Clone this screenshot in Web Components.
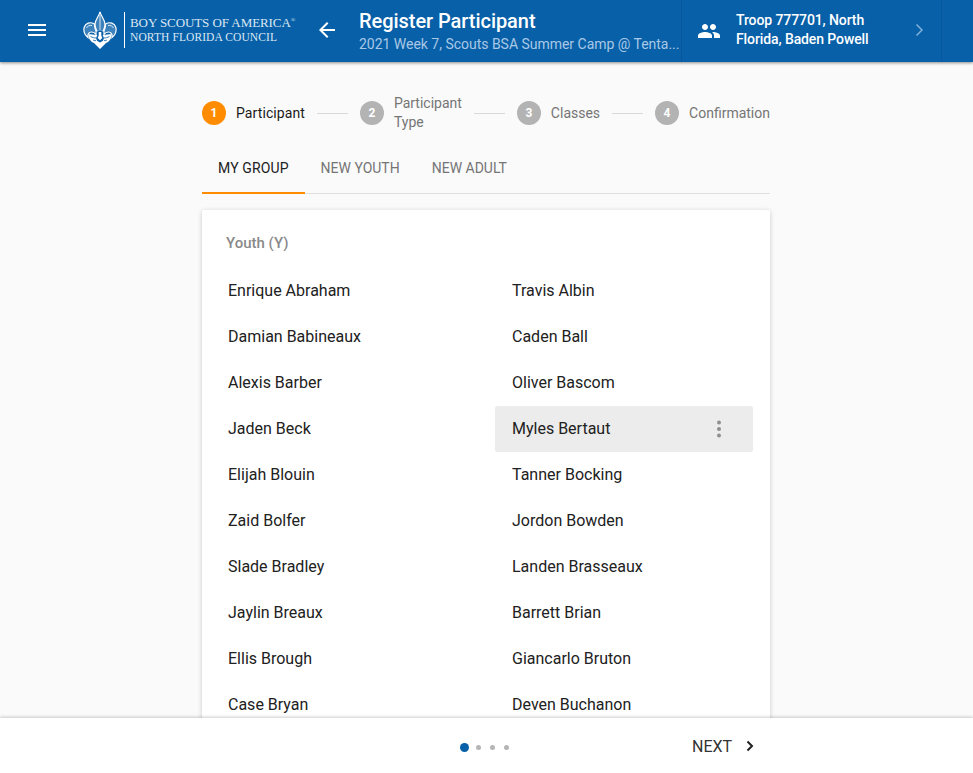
<!DOCTYPE html>
<html lang="en">
<head>
<meta charset="utf-8">
<title>Register Participant</title>
<style>
  html, body { margin: 0; height: 100%; overflow: hidden; }
  body {
    display: flex;
    flex-direction: column;
    background: #fafafa;
    font-family: Roboto, "Liberation Sans", sans-serif;
    color: #212121;
  }
</style>
</head>
<body>
<app-header></app-header>
<wizard-page>
  <step-bar></step-bar>
  <tab-bar></tab-bar>
  <name-card titulo="Youth (Y)">
    <name-item>Enrique Abraham</name-item>
    <name-item>Travis Albin</name-item>
    <name-item>Damian Babineaux</name-item>
    <name-item>Caden Ball</name-item>
    <name-item>Alexis Barber</name-item>
    <name-item>Oliver Bascom</name-item>
    <name-item>Jaden Beck</name-item>
    <name-item activo>Myles Bertaut</name-item>
    <name-item>Elijah Blouin</name-item>
    <name-item>Tanner Bocking</name-item>
    <name-item>Zaid Bolfer</name-item>
    <name-item>Jordon Bowden</name-item>
    <name-item>Slade Bradley</name-item>
    <name-item>Landen Brasseaux</name-item>
    <name-item>Jaylin Breaux</name-item>
    <name-item>Barrett Brian</name-item>
    <name-item>Ellis Brough</name-item>
    <name-item>Giancarlo Bruton</name-item>
    <name-item>Case Bryan</name-item>
    <name-item>Deven Buchanon</name-item>
  </name-card>
</wizard-page>
<wizard-footer></wizard-footer>

<script>
class bsaLogo extends HTMLElement {
  constructor() {
    super();
    this.attachShadow({mode: "open"});
  }
  connectedCallback() {
    this.shadowRoot.innerHTML = /*html*/ `
    <style>
      :host { display: flex; align-items: center; height: 38px; }
      svg { width: 34px; height: 38px; display: block; flex: none; }
      .sep { width: 1px; height: 36px; background: #fff; margin: 0 5px 0 7px; }
      .txt {
        font-family: "Liberation Serif", serif;
        color: #dbe7f3;
        white-space: nowrap;
        padding-bottom: 1px;
      }
      .a { font-size: 13px; line-height: 15px; letter-spacing: -.08px; }
      .b { font-size: 11.5px; line-height: 14px; letter-spacing: .1px; }
      sup { font-size: 6px; line-height: 0; vertical-align: 5px; }
    </style>
    <svg viewBox="0 0 34 38">
      <!-- petalos y punta: contorno blanco, interior azul -->
      <g fill="#3d82bb" stroke="#fff" stroke-width="1.200">
        <path d="M17 .8c.8 4 4.500 7.500 5 12.200.3 3-1.200 5-1.700 7h-6.600c-.5-2-2-4-1.700-7C12.500 8.300 16.200 4.800 17 .8z"/>
        <path d="M11.500 13C7 10.500 2.500 12 1.200 16.200.3 20 2 24 5 26.500c-.5-3 .8-5.500 3.500-5.500 2 0 3.500 1 4.500 2.500V20c-1-2-1.700-4-1.500-7z"/>
        <path d="M22.500 13c4.500-2.500 9-1 10.300 3.200.9 3.800-.8 7.800-3.800 10.300.5-3-.8-5.500-3.500-5.500-2 0-3.500 1-4.500 2.500V20c1-2 1.700-4 1.500-7z"/>
      </g>
      <!-- aguila -->
      <path fill="#fff" d="M5.500 23.500c3-1 6.500.8 11.500.8s8.500-1.800 11.500-.8c0 4.500-2.500 7.500-5.500 8.500l-6 6-6-6c-3-1-5.500-4-5.500-8.500z"/>
      <path fill="none" stroke="#fff" stroke-width=".8" d="M17 4v15M3.500 17c1-2 3-3 5.500-2.500M30.500 17c-1-2-3-3-5.500-2.500"/>
      <path fill="#0860a8" d="M14.500 19.500h5l-.2 4 1.700 3.500-1 2.700-3 1.800-3-1.800-1-2.700 1.700-3.500z"/>
      <path fill="#fff" d="M15.700 21h2.600v3.500l1 2.500-2.300 2.300-2.300-2.300 1-2.500z"/>
      <path fill="none" stroke="#0860a8" stroke-width=".8" d="M7.500 25.500c2 1 4 1.500 5.500 1.500M26.500 25.500c-2 1-4 1.500-5.500 1.500M10 29c1 .6 2 .8 3 .5M24 29c-1 .6-2 .8-3 .5"/>
    </svg>
    <div class="sep"></div>
    <div class="txt">
      <div class="a">BOY SCOUTS OF AMERICA<sup>®</sup></div>
      <div class="b">NORTH FLORIDA COUNCIL</div>
    </div>
    `;
  }
}
customElements.define("bsa-logo", bsaLogo);

class appHeader extends HTMLElement {
  constructor() {
    super();
    this.attachShadow({mode: "open"});
  }
  connectedCallback() {
    this.shadowRoot.innerHTML = /*html*/ `
    <style>
      :host {
        display: flex;
        flex: none;
        height: 62px;
        align-items: stretch;
        background: #0860a8;
        color: #fff;
        box-shadow: 0 1px 3px rgba(0,0,0,.45);
        position: relative;
        z-index: 2;
      }
      svg { display: block; fill: currentColor; }
      .menu { width: 24px; height: 24px; margin: 18px 0 0 25px; flex: none; }
      bsa-logo { margin: 11px 0 0 34px; height: 38px; width: 218px; flex: none; }
      .back { width: 24px; height: 24px; margin: 18px 0 0 14px; flex: none; }
      .titles { width: 322px; margin-left: 20px; min-width: 0; flex: none; }
      .title { font-size: 20px; font-weight: 500; line-height: 24px; margin-top: 9px; letter-spacing: -.05px; white-space: nowrap; }
      .sub {
        font-size: 14px;
        line-height: 20px;
        margin-top: 1px;
        color: #a8c8e6;
        white-space: nowrap;
        letter-spacing: -.02px;
      }
      .troop {
        display: flex;
        align-items: center;
        width: 259px;
        flex: none;
        border-left: 1px solid #07579a;
        border-right: 1px solid #07579a;
      }
      .people { width: 24px; height: 24px; margin-left: 15px; flex: none; }
      .name { font-size: 14px; font-weight: 500; line-height: 19px; margin: 0 0 2px 15px; width: 150px; letter-spacing: -.1px; }
      .chev { width: 20px; height: 20px; margin: 0 0 2px 23px; color: #7fb0dc; }
    </style>
    <svg class="menu" viewBox="0 0 24 24"><path d="M3 18h18v-2H3v2zm0-5h18v-2H3v2zm0-7v2h18V6H3z"/></svg>
    <bsa-logo></bsa-logo>
    <svg class="back" viewBox="0 0 24 24"><path d="M20 11H7.830l5.590-5.590L12 4l-8 8 8 8 1.410-1.410L7.830 13H20v-2z"/></svg>
    <div class="titles">
      <div class="title">Register Participant</div>
      <div class="sub">2021 Week 7, Scouts BSA Summer Camp @ Tenta...</div>
    </div>
    <div class="troop">
      <svg class="people" viewBox="0 0 24 24"><path d="M16 11c1.660 0 2.990-1.340 2.990-3S17.660 5 16 5s-3 1.340-3 3 1.340 3 3 3zm-8 0c1.660 0 2.990-1.340 2.990-3S9.660 5 8 5 5 6.340 5 8s1.340 3 3 3zm0 2c-2.330 0-7 1.170-7 3.500V19h14v-2.500c0-2.330-4.670-3.500-7-3.500zm8 0c-.29 0-.62.020-.97.050 1.160.84 1.970 1.970 1.970 3.450V19h6v-2.500c0-2.330-4.670-3.500-7-3.500z"/></svg>
      <div class="name">Troop 777701, North Florida, Baden Powell</div>
      <svg class="chev" viewBox="0 0 20 20"><path fill="none" stroke="currentColor" stroke-width="1.500" d="M7.500 4.500 13 10l-5.500 5.500"/></svg>
    </div>
    `;
  }
}
customElements.define("app-header", appHeader);

class wizardPage extends HTMLElement {
  constructor() {
    super();
    this.attachShadow({mode: "open"});
    this.shadowRoot.innerHTML = /*html*/ `
    <style>
      :host {
        display: block;
        flex: 1;
        min-height: 0;
        overflow: hidden;
      }
      .col { width: 568px; margin: 0 0 0 202px; padding-top: 31px; }
    </style>
    <div class="col"><slot></slot></div>
    `;
  }
}
customElements.define("wizard-page", wizardPage);

class stepBar extends HTMLElement {
  constructor() {
    super();
    this.attachShadow({mode: "open"});
  }
  connectedCallback() {
    const pasos = [["1", "Participant"], ["2", "Participant Type"], ["3", "Classes"], ["4", "Confirmation"]];
    const html = pasos.map((p, i) => `
      <div class="step ${i === 0 ? "on" : ""}">
        <span class="dot">${p[0]}</span>
        <span class="label ${i === 1 ? "wrap" : ""}">${p[1]}</span>
      </div>`).join(`<div class="line"></div>`);
    this.shadowRoot.innerHTML = /*html*/ `
    <style>
      :host { display: flex; align-items: center; height: 40px; font-size: 14px; color: #757575; }
      .step { display: flex; align-items: center; flex: none; }
      .dot {
        width: 24px;
        height: 24px;
        border-radius: 50%;
        background: #b3b3b3;
        color: #fff;
        font-size: 12px;
        font-weight: 700;
        line-height: 24px;
        text-align: center;
        margin-right: 10px;
      }
      .on .dot { background: #ff8c00; }
      .on .label { color: #1a1a1a; letter-spacing: .09px; }
      .label { line-height: 19px; }
      .wrap { width: 68px; }
      .line { flex: 1; height: 1px; background: #d9d9d9; margin: 0 12px; }
    </style>
    ${html}
    `;
  }
}
customElements.define("step-bar", stepBar);

class tabBar extends HTMLElement {
  constructor() {
    super();
    this.attachShadow({mode: "open"});
    this.shadowRoot.innerHTML = /*html*/ `
    <style>
      :host {
        display: flex;
        height: 51px;
        margin-top: 10px;
        border-bottom: 1px solid #e0e0e0;
        box-sizing: border-box;
        font-size: 14px;
        color: #757575;
      }
      .tab { padding: 0 16px; line-height: 50px; height: 51px; box-sizing: border-box; white-space: nowrap; }
      .on { color: #212121; border-bottom: 2px solid #ff8c00; letter-spacing: .12px; }
    </style>
    <div class="tab on">MY GROUP</div>
    <div class="tab">NEW YOUTH</div>
    <div class="tab">NEW ADULT</div>
    `;
  }
}
customElements.define("tab-bar", tabBar);

class nameCard extends HTMLElement {
  constructor() {
    super();
    this.attachShadow({mode: "open"});
  }
  connectedCallback() {
    this.shadowRoot.innerHTML = /*html*/ `
    <style>
      :host {
        display: block;
        margin-top: 16px;
        background: #fff;
        border-radius: 2px;
        box-shadow: 0 1px 5px rgba(0,0,0,.2);
        padding-bottom: 20px;
      }
      h3 {
        margin: 0;
        padding: 23px 0 0 24px;
        height: 35px;
        font-size: 15px;
        font-weight: 500;
        line-height: 20px;
        color: #8a8a8a;
      }
      .grid {
        display: grid;
        grid-template-columns: 258px 258px;
        column-gap: 26px;
        padding: 0 0 0 9px;
      }
    </style>
    <h3>${this.getAttribute("titulo")}</h3>
    <div class="grid"><slot></slot></div>
    `;
  }
}
customElements.define("name-card", nameCard);

class nameItem extends HTMLElement {
  constructor() {
    super();
    this.attachShadow({mode: "open"});
    this.shadowRoot.innerHTML = /*html*/ `
    <style>
      :host {
        display: flex;
        align-items: center;
        justify-content: space-between;
        height: 46px;
        padding: 0 32px 0 17px;
        font-size: 16px;
        color: #212121;
        border-radius: 2px;
      }
      :host([activo]) { background: #ececec; }
      span { margin-bottom: 2px; }
      svg { display: none; width: 4px; height: 18px; fill: #8f8f8f; }
      :host([activo]) svg { display: block; }
    </style>
    <span><slot></slot></span>
    <svg viewBox="0 0 4 18"><circle cx="2" cy="2.500" r="2"/><circle cx="2" cy="9" r="2"/><circle cx="2" cy="15.500" r="2"/></svg>
    `;
  }
}
customElements.define("name-item", nameItem);

class wizardFooter extends HTMLElement {
  constructor() {
    super();
    this.attachShadow({mode: "open"});
    this.shadowRoot.innerHTML = /*html*/ `
    <style>
      :host {
        display: flex;
        flex: none;
        align-items: center;
        height: 55px;
        background: #fff;
        box-shadow: 0 -1px 3px rgba(0,0,0,.2);
        position: relative;
        z-index: 2;
      }
      .dots { display: flex; align-items: center; gap: 9px; margin: 3px 0 0 460px; }
      .dots i { width: 5px; height: 5px; border-radius: 50%; background: #b5b5b5; }
      .dots i.on { width: 9px; height: 9px; background: #0860a8; margin-right: -2px; }
      .next {
        display: flex;
        align-items: center;
        margin-left: 183px;
        font-size: 16px;
        color: #333;
      }
      .next span { margin-top: 2px; }
      svg { width: 12px; height: 12px; margin-left: 12px; }
    </style>
    <div class="dots"><i class="on"></i><i></i><i></i><i></i></div>
    <div class="next"><span>NEXT</span>
      <svg viewBox="0 0 12 12"><path fill="none" stroke="#212121" stroke-width="2" d="M3.500 1.500 8 6l-4.500 4.500"/></svg>
    </div>
    `;
  }
}
customElements.define("wizard-footer", wizardFooter);
</script>
</body>
</html>
